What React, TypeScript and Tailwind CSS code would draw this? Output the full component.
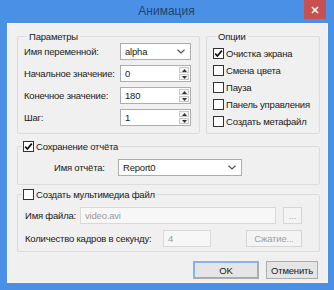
import React from "react";

function Check({ checked }: { checked?: boolean }) {
  return (
    <span className="flex h-[11px] w-[11px] shrink-0 items-center justify-center border border-[#333333] bg-white">
      {checked && (
        <svg width="9" height="9" viewBox="0 0 9 9">
          <path d="M1.2 4.6 L3.4 7 L7.8 1.6" stroke="#111" strokeWidth="1.7" fill="none" />
        </svg>
      )}
    </span>
  );
}

function Chevron() {
  return (
    <svg width="8" height="5" viewBox="0 0 8 5">
      <path d="M0.5 0.8 L4 4 L7.5 0.8" stroke="#555" strokeWidth="1.2" fill="none" />
    </svg>
  );
}

function Combo({ value, width }: { value: string; width: string }) {
  return (
    <div className={`flex h-[17px] items-center justify-between border border-[#acacac] bg-white pl-[4px] pr-[5px] ${width}`}>
      <span>{value}</span>
      <Chevron />
    </div>
  );
}

function Spin({ value }: { value: string }) {
  return (
    <div className="flex h-[17px] w-[71px] items-stretch border border-[#abadb3] bg-white">
      <span className="flex flex-1 items-center pl-[4px]">{value}</span>
      <span className="flex w-[11px] flex-col gap-[1px] py-[1px] pr-[1px]">
        <span className="flex flex-1 items-center justify-center border border-[#c8c8c8] bg-[#f4f4f4]">
          <svg width="5" height="3" viewBox="0 0 5 3">
            <path d="M0 3 L2.5 0 L5 3 Z" fill="#333" />
          </svg>
        </span>
        <span className="flex flex-1 items-center justify-center border border-[#c8c8c8] bg-[#f4f4f4]">
          <svg width="5" height="3" viewBox="0 0 5 3">
            <path d="M0 0 L2.5 3 L5 0 Z" fill="#333" />
          </svg>
        </span>
      </span>
    </div>
  );
}

function Row({ label, children }: { label: string; children: React.ReactNode }) {
  return (
    <div className="flex items-center justify-between">
      <span>{label}</span>
      {children}
    </div>
  );
}

export default function App() {
  const options = [
    { label: "Очистка экрана", checked: true },
    { label: "Смена цвета" },
    { label: "Пауза" },
    { label: "Панель управления" },
    { label: "Создать метафайл" },
  ];

  return (
    <div className="flex h-[290px] w-[334px] flex-col bg-[#4990e6] pb-[7px] pl-[7px] pr-[6px] font-['Liberation_Sans',Arial,sans-serif] text-[9.5px] leading-[13px] tracking-[-0.2px] text-[#1a1a1a]">
      {/* title bar */}
      <div className="flex h-[23px] items-center pr-[2px]">
        <div className="flex-1 pl-[22px] text-center text-[12px] tracking-normal text-[#23446f]">Анимация</div>
        <div className="flex h-[19px] w-[22px] -translate-y-[2px] items-center justify-center bg-[#c75050]">
          <svg width="8" height="8" viewBox="0 0 8 8">
            <path d="M1 1 L7 7 M7 1 L1 7" stroke="#fff" strokeWidth="1.6" />
          </svg>
        </div>
      </div>

      <div className="flex flex-1 flex-col border border-[#f8f8f8] bg-[#f0f0f0] pl-[9px] pr-[7px] pt-[6px]">
        <div className="flex gap-[6px]">
          <fieldset className="w-[183px] rounded-[2px] border border-[#dcdcdc] pb-[6px] pl-[6px] pr-[8px]">
            <legend className="ml-[3px] px-[2px]">Параметры</legend>
            <div className="flex flex-col gap-[5px]">
              <Row label="Имя переменной:">
                <Combo value="alpha" width="w-[71px]" />
              </Row>
              <Row label="Начальное значение:">
                <Spin value="0" />
              </Row>
              <Row label="Конечное значение:">
                <Spin value="180" />
              </Row>
              <Row label="Шаг:">
                <Spin value="1" />
              </Row>
            </div>
          </fieldset>

          <fieldset className="flex-1 rounded-[2px] border border-[#dcdcdc] pb-[3px] pl-[6px] pt-[2px]">
            <legend className="ml-[3px] px-[2px]">Опции</legend>
            {options.map((o) => (
              <div key={o.label} className="flex h-[17px] items-center gap-[2px]">
                <Check checked={o.checked} />
                <span>{o.label}</span>
              </div>
            ))}
          </fieldset>
        </div>

        <fieldset className="mt-[6px] rounded-[2px] border border-[#dcdcdc] pb-[8px] pl-[4px] pt-[6px]">
          <legend className="flex items-center gap-[2px] px-[1px]">
            <Check checked />
            <span>Сохранение отчёта</span>
          </legend>
          <div className="ml-[32px] flex items-center">
            <span className="w-[64px]">Имя отчёта:</span>
            <Combo value="Report0" width="w-[124px]" />
          </div>
        </fieldset>

        <fieldset className="mt-[3px] rounded-[2px] border border-[#dcdcdc] pb-[4px] pl-[4px] pr-[17px] pt-[6px]">
          <legend className="flex items-center gap-[2px] px-[1px]">
            <Check />
            <span>Создать мультимедиа файл</span>
          </legend>
          <div className="ml-[3px] flex flex-col gap-[6px]">
            <div className="flex items-center">
              <span className="w-[55px]">Имя файла:</span>
              <div className="flex h-[17px] flex-1 items-center border border-[#d9d9d9] bg-[#f7f7f7] pl-[4px] text-[#9a9a9a]">
                video.avi
              </div>
              <div className="ml-[7px] flex h-[17px] w-[19px] items-center justify-center border border-[#d5d5d5] bg-[#f4f4f4] text-[#a0a0a0]">
                ...
              </div>
            </div>
            <div className="flex items-center">
              <span className="w-[138px]">Количество кадров в секунду:</span>
              <div className="flex h-[17px] w-[48px] items-center border border-[#d9d9d9] bg-[#f7f7f7] pl-[4px] text-[#9a9a9a]">
                4
              </div>
              <div className="ml-auto flex h-[17px] w-[56px] items-center justify-center border border-[#d5d5d5] bg-[#f4f4f4] text-[#a0a0a0]">
                Сжатие...
              </div>
            </div>
          </div>
        </fieldset>

        <div className="mr-[2px] mt-[9px] flex justify-end gap-[7px]">
          <button className="h-[18px] w-[66px] border border-[#acacac] bg-[#e5e5e5] outline outline-1 -outline-offset-2 outline-[#7eb4ea]">
            OK
          </button>
          <button className="h-[18px] w-[52px] border border-[#acacac] bg-[#e5e5e5]">Отменить</button>
        </div>
      </div>
    </div>
  );
}
